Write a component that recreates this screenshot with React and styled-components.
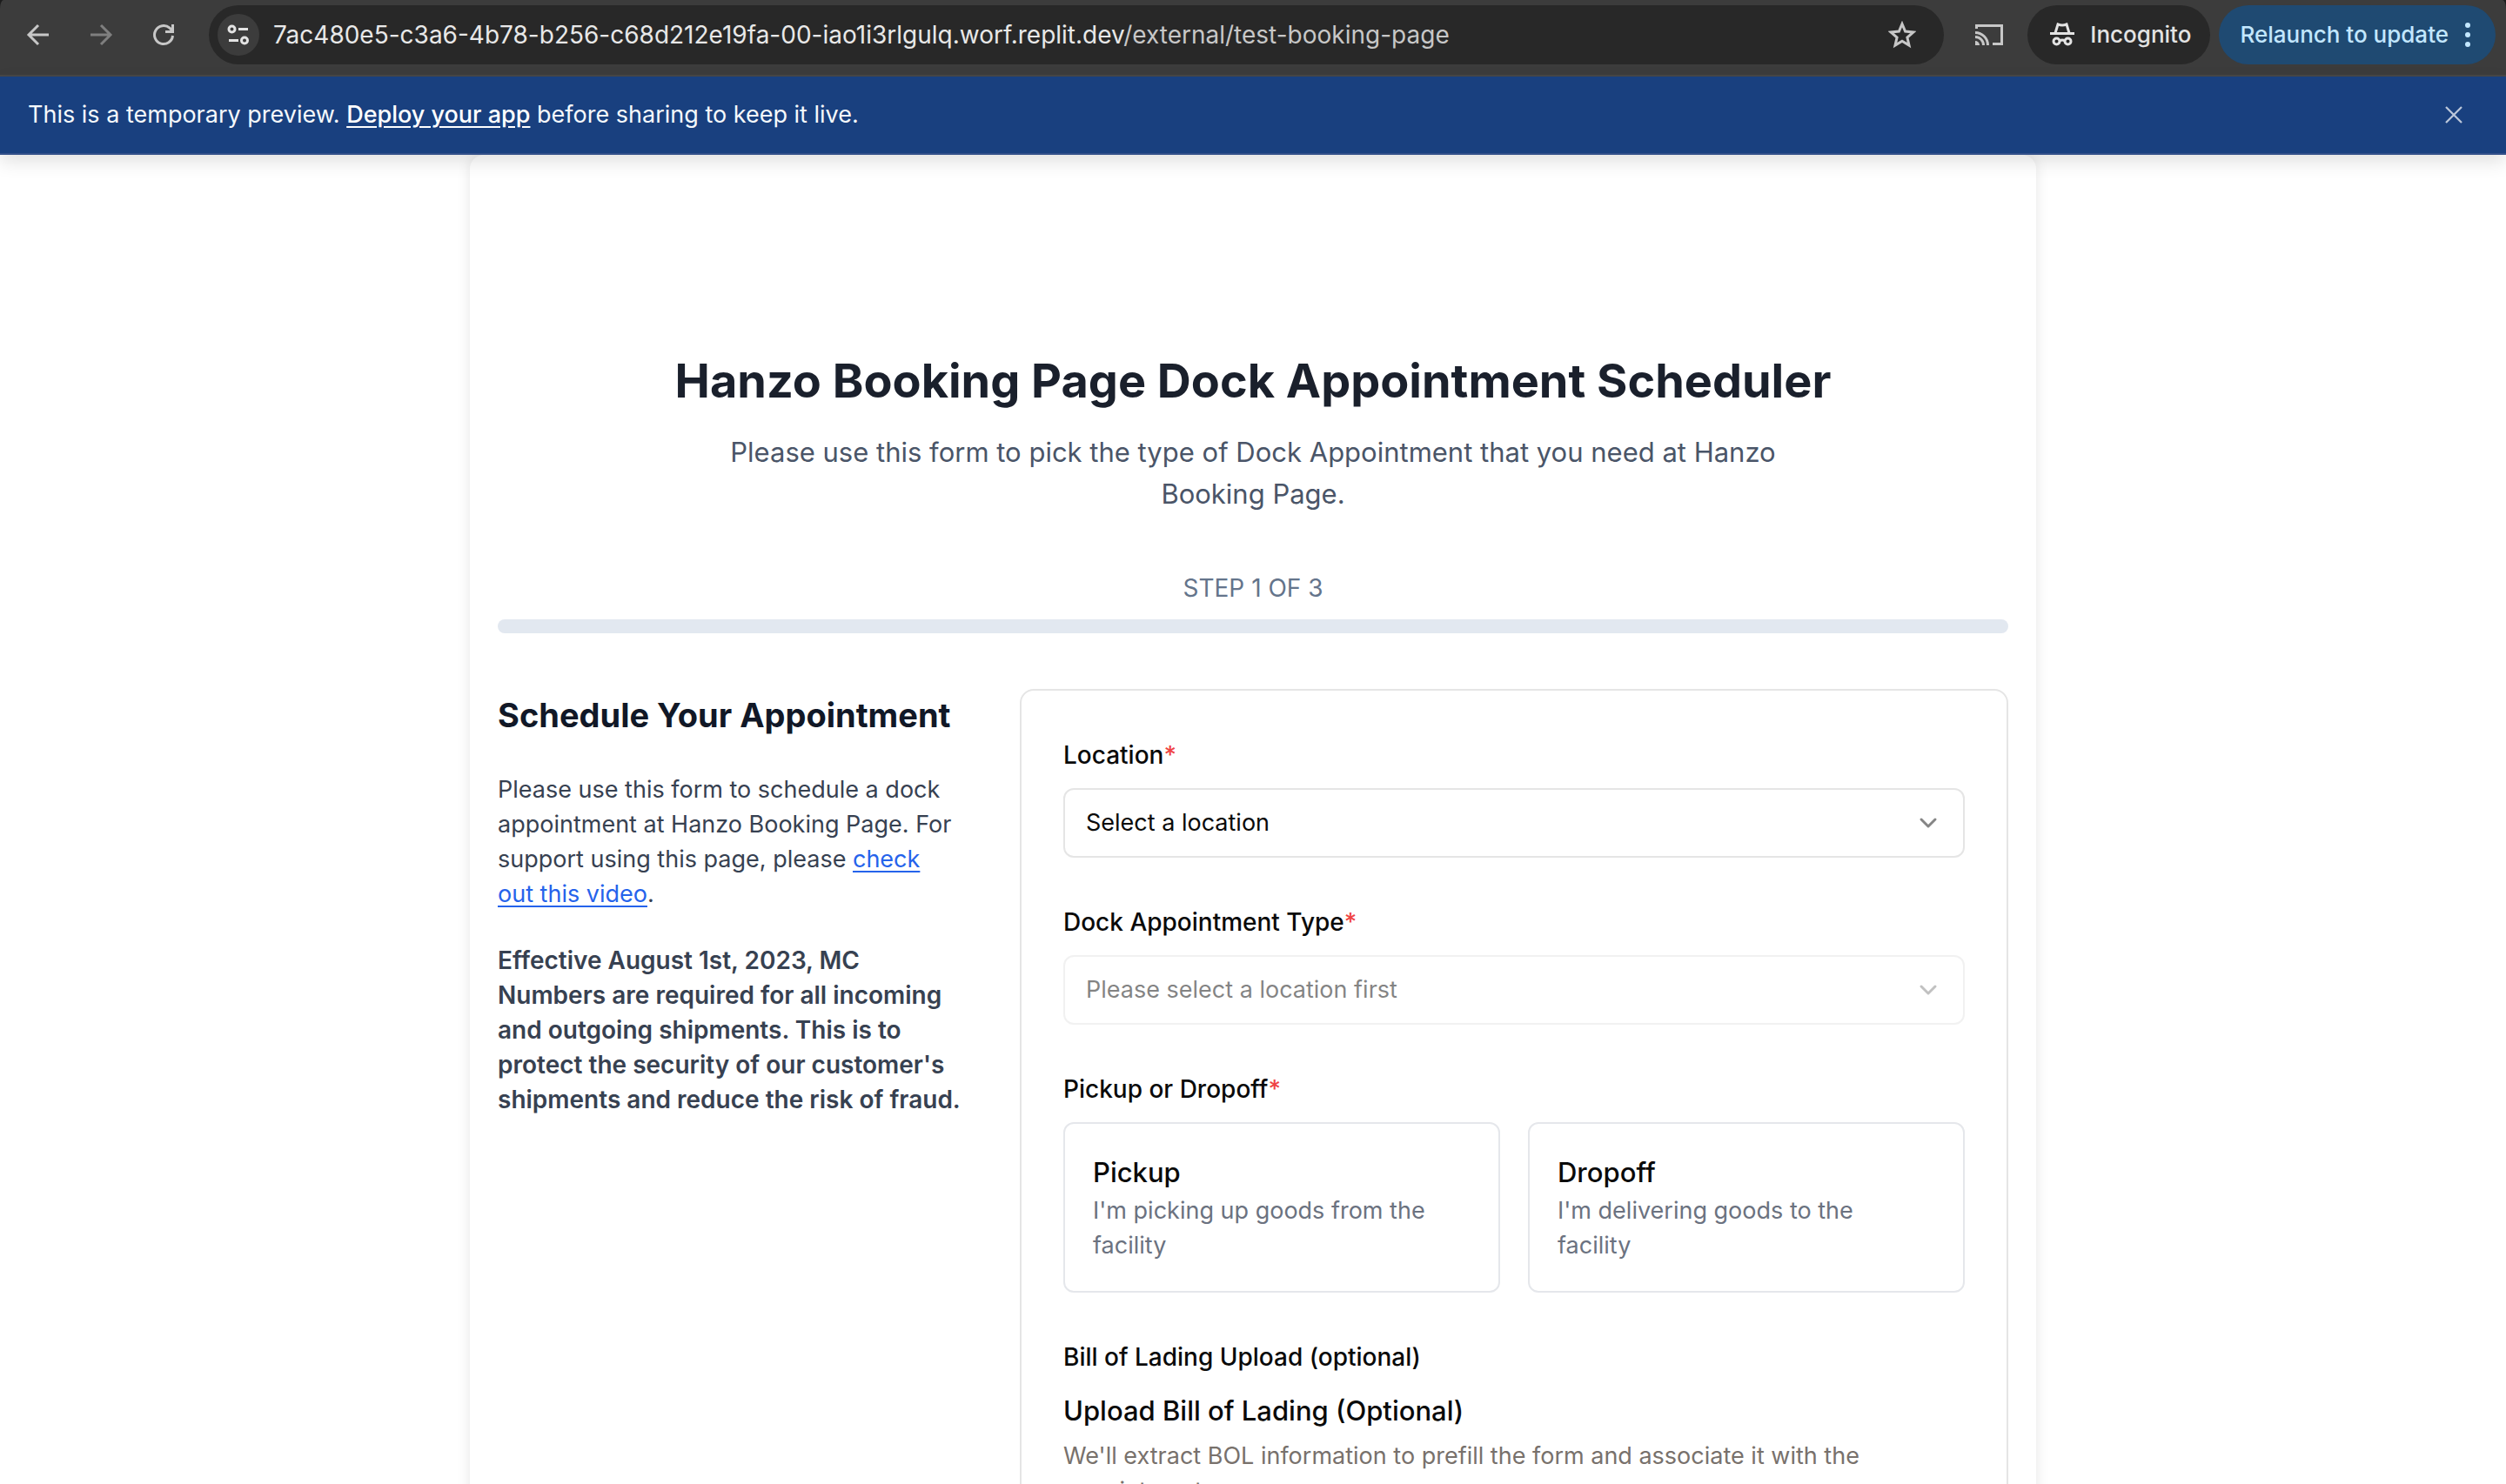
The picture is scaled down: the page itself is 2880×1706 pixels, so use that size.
import React, { useState } from "react";
import styled, { createGlobalStyle } from "styled-components";

const GlobalStyle = createGlobalStyle`
  *, *::before, *::after { box-sizing: border-box; }
  html, body { height: 100%; }
  body {
    margin: 0;
    overflow: hidden;
    background: #ffffff;
    color: #0a0a0a;
    font-family: Inter, "Liberation Sans", sans-serif;
    font-size: 27px;
    line-height: 40px;
  }
  #root { height: 100%; }
  h1, h2, h3, p, fieldset { margin: 0; }
  button, select, input { font: inherit; }
`;

const Window = styled.div`
  display: flex;
  flex-direction: column;
  height: 100vh;
  overflow: hidden;
`;

/* Browser toolbar */

const Chrome = styled.header`
  flex: none;
  background: #1c1c1c;
`;

const Toolbar = styled.div`
  display: flex;
  align-items: center;
  height: 88px;
  padding: 6px 12px 12px 16px;
  border-bottom: 2px solid #474747;
  border-radius: 4px 4px 0 0 / 10px 10px 0 0;
  background: #3c3c3c;
`;

const Nav = styled.nav`
  display: flex;
  gap: 16px;
  margin-right: 24px;
`;

const IconButton = styled.button`
  display: flex;
  flex: none;
  align-items: center;
  justify-content: center;
  width: 56px;
  height: 56px;
  padding: 0;
  border: 0;
  border-radius: 50%;
  background: none;
  color: ${(p) => (p.disabled ? "#7f7f7f" : "#c7c7c7")};
`;

const AddressBar = styled.div`
  display: flex;
  flex: 1;
  align-items: center;
  min-width: 0;
  height: 68px;
  padding: 0 20px 0 10px;
  border-radius: 34px;
  background: #282828;
`;

const SiteInfo = styled(IconButton)`
  width: 48px;
  height: 48px;
  margin-right: 16px;
  background: #3c3c3c;
  color: #e3e3e3;
`;

const Url = styled.span`
  flex: 1;
  overflow: hidden;
  color: #c7c7c7;
  font-size: 28px;
  white-space: nowrap;
`;

const Host = styled.span`
  color: #e8e8e8;
`;

const CastButton = styled(IconButton)`
  margin: 0 16px 0 24px;
`;

const Pill = styled.button`
  display: flex;
  flex: none;
  align-items: center;
  gap: ${(p) => (p.$accent ? "18px" : "16px")};
  height: 68px;
  padding: ${(p) => (p.$accent ? "0 28px 0 24px" : "0 22px 0 24px")};
  margin-left: ${(p) => (p.$accent ? "10px" : "0")};
  border: 0;
  border-radius: 34px;
  background: ${(p) => (p.$accent ? "#1f4a72" : "#282828")};
  color: ${(p) => (p.$accent ? "#c2e7ff" : "#e3e3e3")};
  font-size: 26px;
  font-weight: 500;
`;

/* Preview notice */

const Banner = styled.aside`
  position: relative;
  z-index: 1;
  display: flex;
  flex: none;
  align-items: center;
  justify-content: space-between;
  height: 90px;
  padding: 0 32px;
  border-bottom: 2px solid #33508a;
  background: #19407f;
  box-shadow: 0 8px 20px rgba(0, 0, 0, 0.12);
  color: #f5f9fc;
`;

const BannerLink = styled.a`
  color: #ffffff;
  font-weight: 500;
  text-underline-offset: 4px;
`;

const DismissButton = styled(IconButton)`
  color: #bcc7da;
`;

/* Booking page */

const Page = styled.main`
  flex: 1;
  align-self: center;
  width: 100%;
  max-width: 1800px;
  padding: 224px 32px 0;
  border-radius: 16px;
  box-shadow: 0 0 16px rgba(0, 0, 0, 0.1);
`;

const Intro = styled.div`
  display: flex;
  flex-direction: column;
  align-items: center;
  gap: 22px;
  margin-bottom: 64px;
  text-align: center;
`;

const Title = styled.h1`
  color: #1a202c;
  font-size: 54px;
  font-weight: 700;
  line-height: 72px;
`;

const Lead = styled.p`
  max-width: 1280px;
  color: #4a5568;
  font-size: 31px;
  line-height: 48px;
`;

const Progress = styled.div`
  display: flex;
  flex-direction: column;
  gap: 16px;
  margin-bottom: 64px;
`;

const StepLabel = styled.div`
  color: #64748b;
  font-size: 28px;
  text-align: center;
`;

const Track = styled.div`
  height: 16px;
  border-radius: 8px;
  background: #e2e8f0;
`;

const Columns = styled.div`
  display: grid;
  grid-template-columns: 536px 1fr;
  gap: 64px;
`;

const About = styled.section`
  display: flex;
  flex-direction: column;
  gap: 36px;
  color: #374151;
`;

const AboutTitle = styled.h2`
  color: #111827;
  font-size: 38px;
  font-weight: 700;
  line-height: 60px;
`;

const AboutText = styled.p`
  max-width: ${(p) => (p.$strong ? "none" : "528px")};
  font-size: ${(p) => (p.$strong ? "28px" : "27px")};
  font-weight: ${(p) => (p.$strong ? 600 : 400)};
`;

const TextLink = styled.a`
  color: #2563eb;
  text-underline-offset: 4px;
`;

const Form = styled.form`
  display: flex;
  flex-direction: column;
  gap: 54px;
  padding: 54px 48px;
  border: 2px solid #e5e5e5;
  border-radius: 16px;
`;

const Field = styled.div`
  min-width: 0;
  padding: 0;
  border: 0;
`;

const Label = styled.label`
  display: block;
  margin-bottom: 18px;
  padding: 0;
  font-size: 28px;
  font-weight: 500;
`;

const Required = styled.span`
  color: #ef4444;
`;

const SelectBox = styled.div`
  display: grid;
  align-items: center;
  opacity: ${(p) => (p.$disabled ? 0.5 : 1)};

  > * { grid-area: 1 / 1; }
  > svg {
    justify-self: end;
    margin-right: 26px;
    pointer-events: none;
  }
`;

const Select = styled.select`
  width: 100%;
  height: 80px;
  padding: 0 72px 0 24px;
  border: 2px solid #e5e5e5;
  border-radius: 12px;
  appearance: none;
  background: #ffffff;
  color: #0a0a0a;
  opacity: 1;
`;

const Choices = styled.div`
  display: grid;
  grid-template-columns: 1fr 1fr;
  gap: 32px;
`;

const Choice = styled.button`
  display: flex;
  flex-direction: column;
  padding: 32px 48px 32px 32px;
  border: 2px solid #e5e7eb;
  border-radius: 12px;
  background: #ffffff;
  color: #0a0a0a;
  text-align: left;
`;

const ChoiceTitle = styled.span`
  font-size: 31px;
  font-weight: 500;
  line-height: 48px;
`;

const ChoiceText = styled.span`
  color: #6b7280;
`;

const UploadTitle = styled.h3`
  font-size: 31px;
  font-weight: 500;
  line-height: 48px;
`;

const UploadText = styled.p`
  color: #78716c;
`;

const UploadBody = styled.div`
  display: flex;
  flex-direction: column;
  gap: 8px;
`;

/* Icons */

const Svg = ({ size = 32, children }) => (
  <svg width={size} height={size} viewBox="0 0 32 32" fill="none" stroke="currentColor" strokeWidth="3" aria-hidden="true">
    {children}
  </svg>
);

const BackIcon = () => <Svg><path d="M28 16H6M16 5L5 16l11 11" /></Svg>;
const ForwardIcon = () => <Svg><path d="M4 16h22M16 5l11 11-11 11" /></Svg>;
const ReloadIcon = () => <Svg><path d="M26.500 17A10.500 10.500 0 1 1 23 8.200l3.500 3.500M26.500 4v8.500H18" /></Svg>;
const TuneIcon = () => (
  <Svg><circle cx="8.500" cy="9.500" r="3.500" /><path d="M16 9.500h11M5 22.500h11" /><circle cx="23" cy="22.500" r="3.500" /></Svg>
);
const StarIcon = () => (
  <Svg><path d="M16 3.500l3.600 8.600 9.300.8-7 6.100 2.100 9.100-8-4.800-8 4.800 2.100-9.100-7-6.100 9.300-.8z" /></Svg>
);
const CastIcon = () => (
  <Svg><path d="M1.500 9V5.500h29v21H20M0 13.500A14.500 14.500 0 0 1 14.500 28M0 18.500a9.500 9.500 0 0 1 9.500 9.500" /><path d="M0 23a5 5 0 0 1 5 5H0z" fill="currentColor" stroke="none" /></Svg>
);
const IncognitoIcon = () => (
  <Svg><path d="M2 14.500h28" /><path d="M8 14l3-10q5 2 10 0l3 10" /><circle cx="9.500" cy="23.500" r="3.500" /><circle cx="22.500" cy="23.500" r="3.500" /><path d="M13 23q3-2 6 0" /></Svg>
);
const CloseIcon = () => <Svg size={24}><path d="M4 4l24 24M28 4L4 28" /></Svg>;
const ChevronIcon = () => (
  <svg width="32" height="32" viewBox="0 0 32 32" fill="none" stroke="#858585" strokeWidth="3" strokeLinecap="round" strokeLinejoin="round" aria-hidden="true">
    <path d="M8 12l8 8 8-8" />
  </svg>
);
const DotsIcon = () => (
  <svg width="8" height="32" viewBox="0 0 8 32" fill="currentColor" aria-hidden="true">
    <circle cx="4" cy="5" r="3" /><circle cx="4" cy="16" r="3" /><circle cx="4" cy="27" r="3" />
  </svg>
);

const CHOICES = [
  { id: "pickup", title: "Pickup", text: "I'm picking up goods from the facility" },
  { id: "dropoff", title: "Dropoff", text: "I'm delivering goods to the facility" },
];

function SelectField({ id, label, placeholder, disabled }) {
  return (
    <Field>
      <Label htmlFor={id}>{label}<Required>*</Required></Label>
      <SelectBox $disabled={disabled}>
        <Select id={id} disabled={disabled}><option>{placeholder}</option></Select>
        <ChevronIcon />
      </SelectBox>
    </Field>
  );
}

export default function App() {
  const [direction, setDirection] = useState(null);
  return (
    <Window>
      <GlobalStyle />
      <Chrome>
        <Toolbar>
          <Nav>
            <IconButton aria-label="Back"><BackIcon /></IconButton>
            <IconButton aria-label="Forward" disabled><ForwardIcon /></IconButton>
            <IconButton aria-label="Reload"><ReloadIcon /></IconButton>
          </Nav>
          <AddressBar>
            <SiteInfo aria-label="Site information"><TuneIcon /></SiteInfo>
            <Url><Host>7ac480e5-c3a6-4b78-b256-c68d212e19fa-00-iao1i3rlgulq.worf.replit.dev</Host>/external/test-booking-page</Url>
            <IconButton aria-label="Bookmark"><StarIcon /></IconButton>
          </AddressBar>
          <CastButton aria-label="Cast"><CastIcon /></CastButton>
          <Pill><IncognitoIcon />Incognito</Pill>
          <Pill $accent>Relaunch to update<DotsIcon /></Pill>
        </Toolbar>
      </Chrome>
      <Banner>
        <span>This is a temporary preview. <BannerLink href="#deploy">Deploy your app</BannerLink> before sharing to keep it live.</span>
        <DismissButton aria-label="Dismiss"><CloseIcon /></DismissButton>
      </Banner>
      <Page>
        <Intro>
          <Title>Hanzo Booking Page Dock Appointment Scheduler</Title>
          <Lead>Please use this form to pick the type of Dock Appointment that you need at Hanzo Booking Page.</Lead>
        </Intro>
        <Progress>
          <StepLabel>STEP 1 OF 3</StepLabel>
          <Track />
        </Progress>
        <Columns>
          <About>
            <AboutTitle>Schedule Your Appointment</AboutTitle>
            <AboutText>
              Please use this form to schedule a dock appointment at Hanzo Booking Page. For support using this page, please{" "}
              <TextLink href="#video">check out this video</TextLink>.
            </AboutText>
            <AboutText $strong>
              Effective August 1st, 2023, MC Numbers are required for all incoming and outgoing shipments. This is to protect
              the security of our customer's shipments and reduce the risk of fraud.
            </AboutText>
          </About>
          <Form>
            <SelectField id="location" label="Location" placeholder="Select a location" />
            <SelectField id="type" label="Dock Appointment Type" placeholder="Please select a location first" disabled />
            <Field as="fieldset">
              <Label as="legend">Pickup or Dropoff<Required>*</Required></Label>
              <Choices>
                {CHOICES.map((c) => (
                  <Choice key={c.id} type="button" aria-pressed={direction === c.id} onClick={() => setDirection(c.id)}>
                    <ChoiceTitle>{c.title}</ChoiceTitle>
                    <ChoiceText>{c.text}</ChoiceText>
                  </Choice>
                ))}
              </Choices>
            </Field>
            <Field>
              <Label as="span">Bill of Lading Upload (optional)</Label>
              <UploadBody>
                <UploadTitle>Upload Bill of Lading (Optional)</UploadTitle>
                <UploadText>We'll extract BOL information to prefill the form and associate it with the appointment.</UploadText>
              </UploadBody>
            </Field>
          </Form>
        </Columns>
      </Page>
    </Window>
  );
}
